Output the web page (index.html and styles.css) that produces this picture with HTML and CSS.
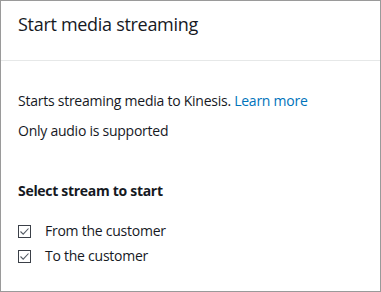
FILE: index.html
```html
<!DOCTYPE html>
<html lang="en">
<head>
<meta charset="utf-8">
<title>Start media streaming</title>
<link rel="stylesheet" href="styles.css">
</head>
<body>
<div class="panel">
  <div class="header">
    <h2 class="title">Start media streaming</h2>
  </div>
  <div class="content">
    <p class="text">Starts streaming media to Kinesis. <a class="link" href="#">Learn more</a></p>
    <p class="text">Only audio is supported</p>
    <h3 class="section">Select stream to start</h3>
    <div class="options">
      <label class="option">
        <svg class="box" width="13" height="13" viewBox="0 0 13 13"><rect x="0.5" y="0.5" width="12" height="12" fill="#fff" stroke="#3b4048"/><polyline points="2.5,6.5 5.2,9.2 10.5,3.5" fill="none" stroke="#545b64" stroke-width="1.1"/></svg>
        <span>From the customer</span>
      </label>
      <label class="option">
        <svg class="box" width="13" height="13" viewBox="0 0 13 13"><rect x="0.5" y="0.5" width="12" height="12" fill="#fff" stroke="#3b4048"/><polyline points="2.5,6.5 5.2,9.2 10.5,3.5" fill="none" stroke="#545b64" stroke-width="1.1"/></svg>
        <span>To the customer</span>
      </label>
    </div>
  </div>
</div>
</body>
</html>
```
FILE: styles.css
```css
html, body {
  margin: 0;
  padding: 0;
  background: #fff;
}
body {
  font-family: "Open Sans", "Noto Sans", sans-serif;
  color: #16191f;
}
.panel {
  box-sizing: border-box;
  width: 381px;
  height: 292px;
  border: 1px solid #9a9a9a;
  background: #fff;
}
.header {
  box-sizing: border-box;
  height: 60px;
  padding: 11px 17px 0;
  border-bottom: 1px solid #e6e8e8;
}
.title {
  margin: 0;
  font-size: 18px;
  line-height: 24px;
  font-weight: 400;
  letter-spacing: -0.3px;
}
.content {
  padding: 30px 17px 0;
}
.text {
  margin: 0 0 10px;
  font-size: 14px;
  line-height: 20px;
  letter-spacing: -0.25px;
}
.link {
  color: #0073bb;
  text-decoration: none;
}
.section {
  margin: 40px 0 20px;
  font-size: 14px;
  line-height: 20px;
  font-weight: 700;
  letter-spacing: -0.3px;
}
.options {
  display: flex;
  flex-direction: column;
  gap: 5px;
}
.option {
  display: flex;
  align-items: center;
  font-size: 14px;
  line-height: 20px;
  letter-spacing: -0.25px;
}
.box {
  flex: none;
  margin-right: 14px;
}
```
